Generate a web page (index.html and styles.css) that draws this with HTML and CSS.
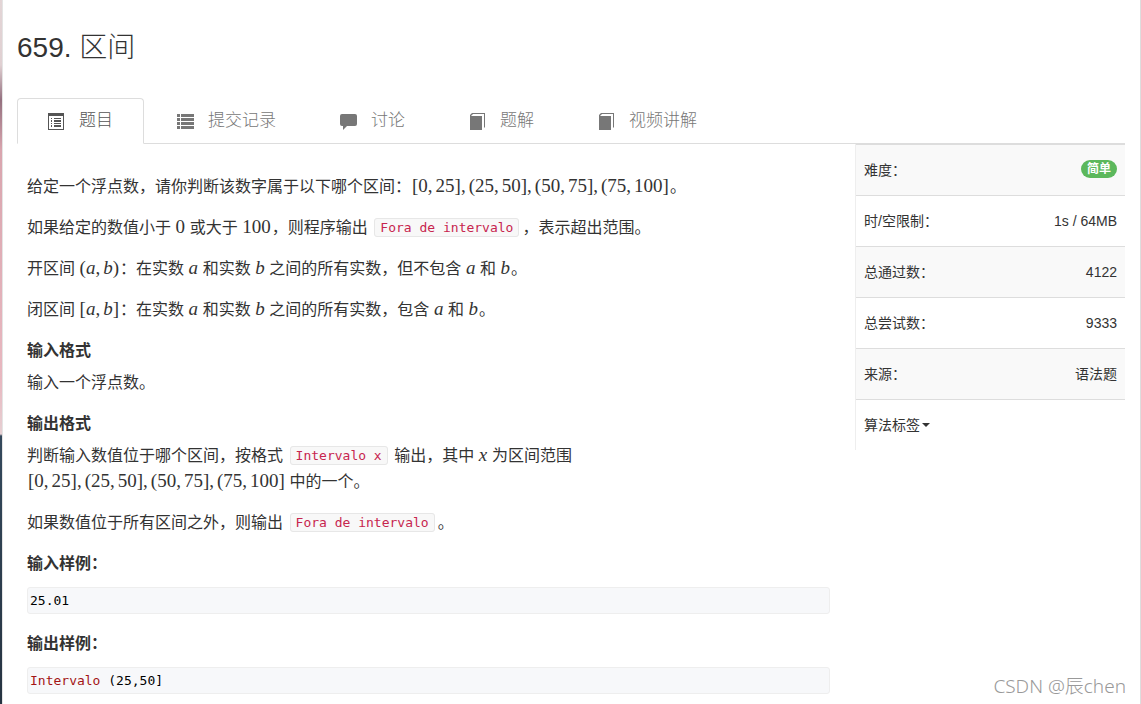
FILE: index.html
```html
<!doctype html>
<html lang="zh-CN">
  <head>
    <meta charset="utf-8" />
    <meta name="viewport" content="width=device-width, initial-scale=1" />
    <title>659. 区间</title>
    <link rel="stylesheet" href="styles.css">
  </head>
  <body>
    <div class="page">
      <h1 class="title">659. 区间</h1>

      <nav class="tabs">
        <a class="tab active" href="#problem">
          <svg class="icon" viewBox="0 0 17 17" fill="currentColor">
            <path fill-rule="evenodd" d="M0 0h16v17H0zM1 3v13h14V3z" />
            <path d="M3 5h1v1H3zM6 5h7v1H6zM3 7h1v2H3zM6 7h7v2H6zM3 10h1v1H3zM6 10h7v1H6zM3 12h1v2H3zM6 12h7v2H6z" />
          </svg>
          题目
        </a>
        <a class="tab" href="#submissions">
          <svg class="icon" viewBox="0 0 17 17" fill="currentColor">
            <path d="M0 1h3v3H0zM0 5h3v3H0zM0 9h3v3H0zM0 13h3v3H0zM4 1h13v3H4zM4 5h13v3H4zM4 9h13v3H4zM4 13h13v3H4z" />
          </svg>
          提交记录
        </a>
        <a class="tab" href="#discussion">
          <svg class="icon" viewBox="0 0 17 17" fill="currentColor">
            <path d="M2 1h13q2 0 2 2v8q0 2-2 2H7l-4 4v-4H2q-2 0-2-2V3q0-2 2-2z" />
          </svg>
          讨论
        </a>
        <a class="tab" href="#solution">
          <svg class="icon" viewBox="0 0 17 17" fill="currentColor">
            <path d="M3 0h13v14l-1 1V1H4L2 3h11v14H1V2z" />
          </svg>
          题解
        </a>
        <a class="tab" href="#video">
          <svg class="icon" viewBox="0 0 17 17" fill="currentColor">
            <path d="M3 0h13v14l-1 1V1H4L2 3h11v14H1V2z" />
          </svg>
          视频讲解
        </a>
      </nav>

      <div class="columns">
        <main class="problem" id="problem">
          <p>给定一个浮点数，请你判断该数字属于以下哪个区间：<span class="math">[0<i class="comma">,</i>25]<i class="comma">,</i>(25<i class="comma">,</i>50]<i class="comma">,</i>(50<i class="comma">,</i>75]<i class="comma">,</i>(75<i class="comma">,</i>100]</span>。</p>
          <p>如果给定的数值小于 <span class="math">0</span> 或大于 <span class="math">100</span>，则程序输出 <code>Fora de intervalo</code>，表示超出范围。</p>
          <p>开区间 <span class="math">(<var>a</var><i class="comma">,</i><var>b</var>)</span>：在实数 <var class="math">a</var> 和实数 <var class="math">b</var> 之间的所有实数，但不包含 <var class="math">a</var> 和 <var class="math">b</var>。</p>
          <p>闭区间 <span class="math">[<var>a</var><i class="comma">,</i><var>b</var>]</span>：在实数 <var class="math">a</var> 和实数 <var class="math">b</var> 之间的所有实数，包含 <var class="math">a</var> 和 <var class="math">b</var>。</p>

          <h4>输入格式</h4>
          <p>输入一个浮点数。</p>

          <h4>输出格式</h4>
          <p>
            判断输入数值位于哪个区间，按格式 <code>Intervalo x</code> 输出，其中 <var class="math">x</var> 为区间范围<br />
            <span class="math">[0<i class="comma">,</i>25]<i class="comma">,</i>(25<i class="comma">,</i>50]<i class="comma">,</i>(50<i class="comma">,</i>75]<i class="comma">,</i>(75<i class="comma">,</i>100]</span> 中的一个。
          </p>
          <p>如果数值位于所有区间之外，则输出 <code>Fora de intervalo</code>。</p>

          <h4>输入样例：</h4>
          <pre>25.01</pre>

          <h4>输出样例：</h4>
          <pre><span class="type">Intervalo</span> (25,50]</pre>
        </main>

        <aside class="side">
          <table class="info">
            <tr>
              <th scope="row">难度：</th>
              <td><span class="badge">简单</span></td>
            </tr>
            <tr>
              <th scope="row">时/空限制：</th>
              <td>1s / 64MB</td>
            </tr>
            <tr>
              <th scope="row">总通过数：</th>
              <td>4122</td>
            </tr>
            <tr>
              <th scope="row">总尝试数：</th>
              <td>9333</td>
            </tr>
            <tr>
              <th scope="row">来源：</th>
              <td>语法题</td>
            </tr>
            <tr>
              <th colspan="2"><button class="toggle" type="button">算法标签<span class="caret"></span></button></th>
            </tr>
          </table>
        </aside>
      </div>

      <div class="watermark">CSDN @辰chen</div>
    </div>
  </body>
</html>
```

FILE: styles.css
```css
* {
  box-sizing: border-box;
}
body {
  margin: 0;
  background-color: #fff;
  color: #333;
  font-family: "Liberation Sans", "Noto Sans CJK SC", sans-serif;
  font-size: 14px;
  line-height: 20px;
}
.page {
  position: relative;
  min-height: 100vh;
  padding: 31px 15px 8px 17px;
  border-right: 1px solid #ddd;
}
/* sliver of the desktop behind the window */
.page::before {
  content: "";
  position: absolute;
  top: 0;
  bottom: 0;
  left: 0;
  width: 2px;
  border-right: 1px solid #e4e4e4;
  background: linear-gradient(#e3d5d6 0, #e0d0d2 65px, #94707f 100px, #d9a5ae 150px, #e8b8c0 380px, #e6d0d3 434px, #34495c 436px, #263341 100%);
}
.title {
  margin: 0 0 33px;
  font-size: 28px;
  font-weight: 300;
  line-height: 34px;
}

.tabs {
  display: flex;
  gap: 2px;
  border-bottom: 1px solid #ddd;
}
.tab {
  display: flex;
  align-items: center;
  gap: 14px;
  margin-bottom: -1px;
  padding: 10px 30px;
  border: 1px solid transparent;
  border-radius: 4px 4px 0 0;
  color: #777;
  font-size: 17px;
  font-weight: 300;
  line-height: 24px;
  text-decoration: none;
}
.tab.active {
  border-color: #ddd;
  border-bottom-color: #fff;
  background-color: #fff;
  color: #555;
}
.icon {
  width: 17px;
  height: 17px;
}

.columns {
  display: grid;
  grid-template-columns: 1fr 270px;
  align-items: start;
}
.problem {
  padding: 28px 25px 0 10px;
  font-family: "Noto Sans CJK SC", sans-serif;
  font-size: 16px;
  line-height: 26px;
}
.problem p {
  margin: 0 0 15px;
}
.problem h4 {
  margin: 0 0 6px;
  font-size: 16px;
}
.math {
  margin: 0 1px;
  font-family: "Liberation Serif", serif;
  font-size: 19px;
  line-height: 1;
}
.comma {
  margin-right: 3px;
  font-style: normal;
}
code,
pre {
  font-family: "DejaVu Sans Mono", monospace;
  font-size: 13px;
}
code {
  margin: 0 3px;
  padding: 1px 5px;
  border: 1px solid #e7e7e7;
  border-radius: 3px;
  background-color: #f8f8f8;
  color: #c7254e;
  line-height: 1;
  vertical-align: 1px;
}
pre {
  margin: 12px 0 15px;
  padding: 2px;
  border: 1px solid #eee;
  border-radius: 3px;
  background-color: #f7f8fa;
  color: #000;
  line-height: 21px;
}
pre:last-child {
  margin-bottom: 0;
}
.type {
  color: #a31515;
}

.side {
  border-left: 1px solid #eee;
}
.info {
  width: 100%;
  border-collapse: collapse;
}
.info th,
.info td {
  padding: 15px 8px;
  border-top: 1px solid #ddd;
  font-weight: 400;
  text-align: left;
}
.info td {
  text-align: right;
}
.info tr:nth-child(odd) {
  background-color: #f9f9f9;
}
.badge {
  display: inline-block;
  padding: 0 6px;
  border-radius: 10px;
  background-color: #5cb85c;
  color: #fff;
  font-size: 12px;
  font-weight: 700;
  line-height: 18px;
  vertical-align: top;
}
.toggle {
  display: flex;
  align-items: center;
  gap: 2px;
  padding: 0;
  border: 0;
  background: none;
  color: inherit;
  font: inherit;
}
.caret {
  border-top: 4px solid;
  border-right: 4px solid transparent;
  border-left: 4px solid transparent;
}

.watermark {
  position: absolute;
  right: 14px;
  bottom: 6px;
  color: #999;
  font-family: "Noto Sans", "Noto Sans CJK SC", sans-serif;
  font-size: 19px;
  font-weight: 300;
  line-height: 24px;
}
```
